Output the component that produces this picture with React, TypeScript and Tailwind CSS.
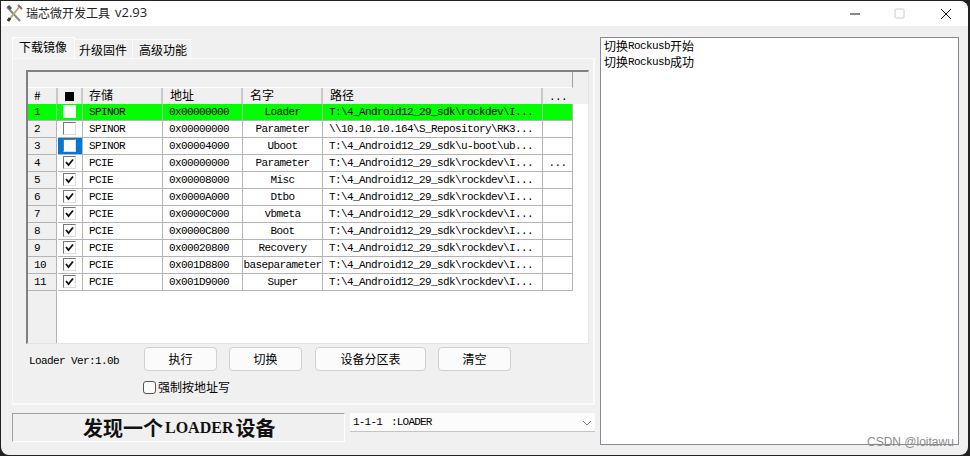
const cjk = "font-['Noto_Sans_CJK_SC',sans-serif]";
const mono = "font-['Liberation_Mono','Noto_Sans_CJK_SC',monospace]";

const columns = [
  { label: "存储", width: "w-[80px]", align: "pl-[6px]" },
  { label: "地址", width: "w-[80px]", align: "pl-[7px]" },
  { label: "名字", width: "w-[80px]", align: "pl-[7px]" },
  { label: "路径", width: "w-[220px]", align: "pl-[7px]" },
];

const rows = [
  { store: "SPINOR", addr: "0x00000000", name: "Loader", path: "T:\\4_Android12_29_sdk\\rockdev\\I...", more: "", checked: false },
  { store: "SPINOR", addr: "0x00000000", name: "Parameter", path: "\\\\10.10.10.164\\S_Repository\\RK3...", more: "", checked: false },
  { store: "SPINOR", addr: "0x00004000", name: "Uboot", path: "T:\\4_Android12_29_sdk\\u-boot\\ub...", more: "", checked: false },
  { store: "PCIE", addr: "0x00000000", name: "Parameter", path: "T:\\4_Android12_29_sdk\\rockdev\\I...", more: "...", checked: true },
  { store: "PCIE", addr: "0x00008000", name: "Misc", path: "T:\\4_Android12_29_sdk\\rockdev\\I...", more: "", checked: true },
  { store: "PCIE", addr: "0x0000A000", name: "Dtbo", path: "T:\\4_Android12_29_sdk\\rockdev\\I...", more: "", checked: true },
  { store: "PCIE", addr: "0x0000C000", name: "vbmeta", path: "T:\\4_Android12_29_sdk\\rockdev\\I...", more: "", checked: true },
  { store: "PCIE", addr: "0x0000C800", name: "Boot", path: "T:\\4_Android12_29_sdk\\rockdev\\I...", more: "", checked: true },
  { store: "PCIE", addr: "0x00020800", name: "Recovery", path: "T:\\4_Android12_29_sdk\\rockdev\\I...", more: "", checked: true },
  { store: "PCIE", addr: "0x001D8800", name: "baseparameter", path: "T:\\4_Android12_29_sdk\\rockdev\\I...", more: "", checked: true },
  { store: "PCIE", addr: "0x001D9000", name: "Super", path: "T:\\4_Android12_29_sdk\\rockdev\\I...", more: "", checked: true },
];

const buttons = [
  { label: "执行", width: "w-[73px]", gap: "mr-[12px]" },
  { label: "切换", width: "w-[73px]", gap: "mr-[13px]" },
  { label: "设备分区表", width: "w-[111px]", gap: "mr-[12px]" },
  { label: "清空", width: "w-[73px]", gap: "" },
];

function AppIcon() {
  return (
    <svg width="18" height="20" viewBox="0 0 18 20" className="shrink-0">
      <path d="M2 3 L15 17" stroke="#8a8a8a" strokeWidth="2" />
      <path d="M3 2 L6 5" stroke="#555" strokeWidth="3" />
      <path d="M15 2 L3 17" stroke="#c9a565" strokeWidth="2" />
      <path d="M3 17 L5 14" stroke="#333" strokeWidth="3" />
      <path d="M13 1 L17 5" stroke="#777" strokeWidth="2" />
    </svg>
  );
}

function RowCheckbox({ checked, selected }: { checked: boolean; selected: boolean }) {
  return (
    <div
      className={`w-[13px] h-[13px] bg-white border ${
        selected ? "border-white" : "border-t-[#777] border-l-[#777] border-r-[#ddd] border-b-[#ddd]"
      } flex items-center justify-center`}
    >
      {checked && (
        <svg width="9" height="9" viewBox="0 0 9 9">
          <path d="M1 4 L3.5 7 L8 1.5" fill="none" stroke="#111" strokeWidth="1.8" />
        </svg>
      )}
    </div>
  );
}

function Grid() {
  return (
    <div className="w-[563px] h-[274px] flex flex-col bg-white border-t-2 border-l-2 border-t-[#808080] border-l-[#808080] border-r border-b border-r-[#e4e4e4] border-b-[#e4e4e4]">
      <div className="h-[32px] shrink-0 bg-[#f0f0f0] flex flex-col">
        <div className="h-[16px] w-[545px] border-r border-b border-r-[#a0a0a0] border-b-white" />
        <div className={`h-[16px] flex text-[12px] leading-[14px] text-black ${cjk}`}>
          <div className="w-[30px] pl-[6px] border-r-2 border-[#c8c8c8]">#</div>
          <div className="w-[25px] flex items-center justify-center border-r-2 border-[#c8c8c8]">
            <div className="w-[9px] h-[9px] bg-black" />
          </div>
          {columns.map((c) => (
            <div key={c.label} className={`${c.width} ${c.align} border-r-2 border-[#c8c8c8]`}>
              {c.label}
            </div>
          ))}
          <div className={`w-[30px] text-center text-[11px] tracking-[-0.6px] leading-[18px] ${mono}`}>...</div>
        </div>
      </div>
      {rows.map((r, i) => {
        const selected = i === 0;
        return (
          <div
            key={i}
            className={`h-[17px] w-[545px] shrink-0 flex text-[11px] tracking-[-0.6px] leading-[17px] text-black ${mono} ${selected ? "bg-[#00ff00]" : ""}`}
          >
            <div
              className={`w-[29px] mr-px pl-[6px] border-b border-r border-[#b4b4b4] ${selected ? "bg-[#00ff00]" : "bg-[#f0f0f0]"}`}
            >
              {i + 1}
            </div>
            <div
              className={`w-[25px] flex items-center justify-center pb-px pr-px border-b border-r border-[#b4b4b4] ${i === 2 ? "bg-[#0078d7]" : ""}`}
            >
              <RowCheckbox checked={r.checked} selected={selected} />
            </div>
            <div className="w-[80px] pl-[6px] border-b border-r border-[#b4b4b4]">{r.store}</div>
            <div className="w-[80px] pl-[6px] border-b border-r border-[#b4b4b4]">{r.addr}</div>
            <div className="w-[80px] text-center border-b border-r border-[#b4b4b4] whitespace-nowrap">{r.name}</div>
            <div className="w-[220px] pl-[6px] border-b border-r border-[#b4b4b4] whitespace-nowrap">{r.path}</div>
            <div className="w-[30px] text-center border-b border-r border-[#b4b4b4]">{r.more}</div>
          </div>
        );
      })}
      <div className="flex-1 w-[29px] bg-[#f0f0f0] border-r border-[#b4b4b4]" />
    </div>
  );
}

export default function App() {
  return (
    <div className="relative w-[970px] h-[456px] bg-[#222] pt-px pb-px pl-px pr-[2px] overflow-hidden">
      <div className="h-full rounded-b-lg rounded-tr-lg bg-[#f0f0f0] overflow-hidden flex flex-col">
        {/* Title bar */}
        <div className={`h-[25px] shrink-0 bg-white flex items-center pl-[4px] text-[12px] text-[#222] ${cjk}`}>
          <AppIcon />
          <span className="ml-[3px] -mt-[1px]">瑞芯微开发工具</span>
          <span className="ml-[5px] -mt-[1px] font-['Open_Sans',sans-serif] text-[13px]">v2.93</span>
          <div className="ml-auto flex items-center">
            <svg width="12" height="12" viewBox="0 0 12 12" className="mr-[33px]">
              <path d="M1 6 H11" stroke="#111" strokeWidth="1" />
            </svg>
            <svg width="11" height="11" viewBox="0 0 11 11" className="mr-[35px]">
              <rect x="1" y="1" width="9" height="9" rx="1" fill="none" stroke="#ccc" />
            </svg>
            <svg width="12" height="12" viewBox="0 0 12 12" className="mr-[16px]">
              <path d="M1 1 L11 11 M11 1 L1 11" stroke="#111" strokeWidth="1" />
            </svg>
          </div>
        </div>

        <div className="flex-1 flex pt-[11px] pl-[11px]">
          {/* Left side */}
          <div className="w-[583px] flex flex-col">
            <div className={`h-[21px] flex items-end text-[12px] text-black ${cjk}`}>
              <div className="w-[63px] h-[21px] bg-[#f3f3f3] border-t border-l border-r border-white pl-[6px] leading-[18px]">下载镜像</div>
              <div className="w-[58px] h-[19px] border-t border-r border-[#fafafa] pl-[4px] leading-[19px]">升级固件</div>
              <div className="w-[58px] h-[19px] border-t border-r border-[#fafafa] pl-[6px] leading-[19px]">高级功能</div>
            </div>
            <div className="h-[347px] border-t border-l border-r-2 border-b-2 border-[#fafafa] pl-[13px] pt-[11px]">
              <Grid />
              <div className="flex items-start mt-[3px]">
                <div className={`w-[118px] pl-[3px] pt-[8px] text-[11px] tracking-[-0.6px] leading-[12px] text-black ${mono}`}>Loader Ver:1.0b</div>
                {buttons.map((b) => (
                  <div
                    key={b.label}
                    className={`${b.width} ${b.gap} h-[24px] rounded-[4px] bg-[#fbfbfb] border border-[#d0d0d0] flex items-center justify-center text-[12px] text-black ${cjk}`}
                  >
                    {b.label}
                  </div>
                ))}
              </div>
              <div className={`flex items-center ml-[117px] mt-[7px] text-[12px] text-black ${cjk}`}>
                <div className="w-[13px] h-[13px] rounded-[3px] bg-[#fafafa] border border-[#555]" />
                <span className="ml-[2px]">强制按地址写</span>
              </div>
            </div>
            <div className="flex mt-[8px]">
              <div className="w-[333px] h-[29px] border-t border-l border-[#a0a0a0] border-r-white border-b-white border-r border-b pl-[70px] flex items-center text-[20px] font-bold text-[#111] font-['Noto_Sans_CJK_SC',serif]">
                发现一个<span className="text-[16px] font-['Liberation_Serif',serif] mx-[2px]">LOADER</span>设备
              </div>
              <div className={`ml-[5px] w-[245px] h-[19px] bg-[#fcfcfc] border-b border-[#c4c4c4] flex items-center pl-[3px] pr-[3px] pt-px text-[11px] tracking-[-0.8px] text-black ${mono}`}>
                <span>1-1-1</span>
                <span className="ml-[9px]">:LOADER</span>
                <svg width="10" height="6" viewBox="0 0 10 6" className="ml-auto">
                  <path d="M1 1 L5 5 L9 1" fill="none" stroke="#777" strokeWidth="1" />
                </svg>
              </div>
            </div>
          </div>

          {/* Log panel */}
          <div className={`ml-[5px] w-[359px] h-[408px] bg-white border border-[#8a8a96] pl-[3px] text-[12px] text-black ${cjk}`}>
            <div className="h-[16px] leading-[16px] flex items-center">切换<span className={`text-[11px] tracking-[-0.6px] ${mono}`}>Rockusb</span>开始</div>
            <div className="h-[16px] leading-[16px] flex items-center">切换<span className={`text-[11px] tracking-[-0.6px] ${mono}`}>Rockusb</span>成功</div>
          </div>
        </div>
      </div>
      <div className="absolute left-[867px] top-[434px] text-[12px] leading-[16px] text-[#8c8c8c] font-['Liberation_Sans',sans-serif]">CSDN @loitawu</div>
    </div>
  );
}
